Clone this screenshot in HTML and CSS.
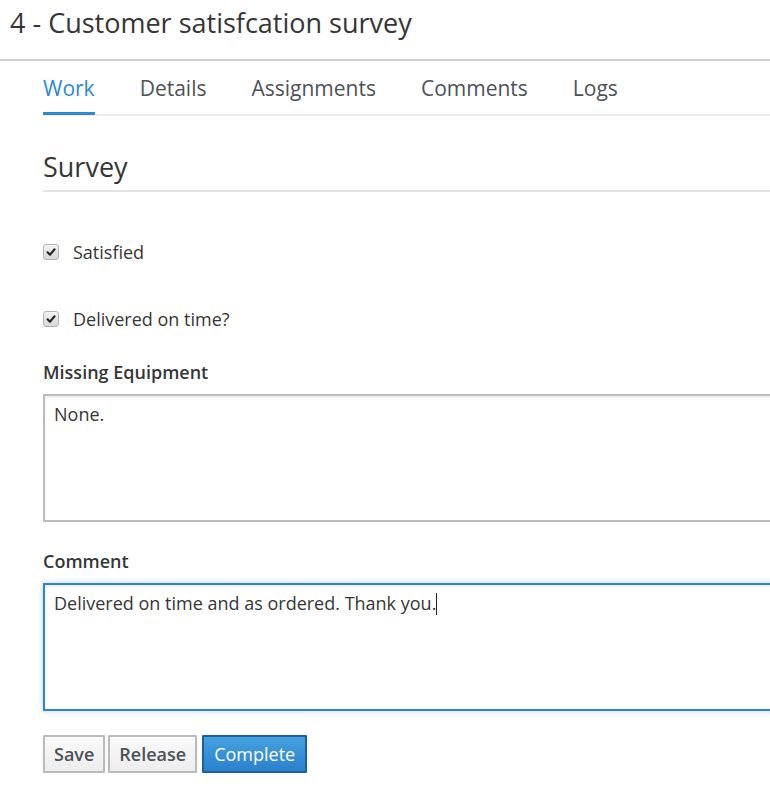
FILE: index.html
```html
<!DOCTYPE html>
<html>
<head>
<meta charset="utf-8">
<link rel="stylesheet" href="styles.css">
</head>
<body>
<div class="page">
  <h1 class="title">4 - Customer satisfcation survey</h1>
  <div class="content">
    <ul class="tabs">
      <li class="tab active">Work</li>
      <li class="tab">Details</li>
      <li class="tab">Assignments</li>
      <li class="tab">Comments</li>
      <li class="tab">Logs</li>
    </ul>
    <h2 class="section">Survey</h2>
    <div class="check-row first">
      <span class="cb"><svg viewBox="0 0 16 16" width="16" height="16"><path d="M3.4 8.4 L6.6 11.6 L12.8 4.4" fill="none" stroke="#262626" stroke-width="2.8" stroke-linecap="round" stroke-linejoin="round"/></svg></span>
      <span class="check-label">Satisfied</span>
    </div>
    <div class="check-row">
      <span class="cb"><svg viewBox="0 0 16 16" width="16" height="16"><path d="M3.4 8.4 L6.6 11.6 L12.8 4.4" fill="none" stroke="#262626" stroke-width="2.8" stroke-linecap="round" stroke-linejoin="round"/></svg></span>
      <span class="check-label">Delivered on time?</span>
    </div>
    <div class="field">
      <div class="field-label">Missing Equipment</div>
      <div class="textarea">None.</div>
    </div>
    <div class="field">
      <div class="field-label">Comment</div>
      <div class="textarea focus">Delivered on time and as ordered. Thank you.<span class="caret"></span></div>
    </div>
    <div class="buttons">
      <button class="btn">Save</button>
      <button class="btn">Release</button>
      <button class="btn primary">Complete</button>
    </div>
  </div>
</div>
</body>
</html>
```

FILE: styles.css
```css
html, body {
  margin: 0;
  padding: 0;
  background: #fff;
  overflow: hidden;
}
body {
  font-family: "Open Sans", "Noto Sans", sans-serif;
  color: #363636;
}
.page {
  width: 770px;
  overflow: hidden;
}
.title {
  margin: 0;
  padding: 4px 0 0 10px;
  height: 55px;
  font-size: 27px;
  font-weight: 400;
  line-height: 38px;
  color: #363636;
  border-bottom: 2px solid #d1d1d1;
}
.content {
  padding-left: 43px;
}
.tabs {
  list-style: none;
  margin: 0;
  padding: 0;
  display: flex;
  gap: 45px;
  border-bottom: 2px solid #ececec;
  height: 53px;
}
.tab {
  font-size: 21px;
  line-height: 26px;
  padding-top: 14px;
  color: #4d5258;
  height: 39px;
}
.tab.active {
  color: #2b89d6;
  border-bottom: 3px solid #2b89d6;
  height: 37px;
}
.section {
  margin: 0;
  padding-top: 34px;
  font-size: 27px;
  font-weight: 400;
  line-height: 34px;
  height: 40px;
  color: #363636;
  border-bottom: 2px solid #e3e3e3;
}
.check-row {
  display: flex;
  align-items: center;
  height: 22px;
  margin-top: 45px;
}
.check-row.first {
  margin-top: 49px;
}
.cb {
  width: 14px;
  height: 14px;
  border: 1px solid #b3b3b3;
  border-radius: 3px;
  background: linear-gradient(#f4f4f4, #d6d6d6);
  display: flex;
  align-items: center;
  justify-content: center;
  margin-right: 14px;
}
.cb svg {
  width: 12px;
  height: 12px;
}
.check-label {
  font-size: 18px;
  color: #363636;
}
.field {
  margin-top: 30px;
}
.field + .field {
  margin-top: 27px;
}
.field-label {
  font-size: 18px;
  font-weight: 600;
  line-height: 24px;
  color: #363636;
  margin-bottom: 10px;
}
.textarea {
  width: 760px;
  height: 112px;
  border: 2px solid #bbbbbb;
  box-shadow: inset 0 2px 3px rgba(0,0,0,0.07);
  padding: 6px 9px;
  font-size: 18px;
  line-height: 24px;
  color: #363636;
  background: #fff;
  box-sizing: content-box;
}
.textarea.focus {
  border-color: #2f84d0;
  box-shadow: inset 0 2px 3px rgba(0,0,0,0.07), 0 0 6px rgba(57,140,220,0.35);
}
.caret {
  display: inline-block;
  width: 1px;
  height: 22px;
  background: #222;
  vertical-align: -5px;
}
.buttons {
  display: flex;
  gap: 3px;
  margin-top: 24px;
}
.btn {
  font-family: "Open Sans", "Noto Sans", sans-serif;
  font-size: 18px;
  font-weight: 600;
  height: 38px;
  padding: 0 9px;
  border: 2px solid #bbbbbb;
  background: linear-gradient(#fafafa, #ededed);
  color: #4d5258;
  border-radius: 1px;
  box-shadow: 0 2px 3px rgba(0,0,0,0.08);
}
.btn.primary {
  margin-left: 2px;
  padding: 0 10px;
  color: #fff;
  font-weight: 500;
  border-color: #1e5f9e;
  background: linear-gradient(#45a2e0, #2b80cd);
}
```
